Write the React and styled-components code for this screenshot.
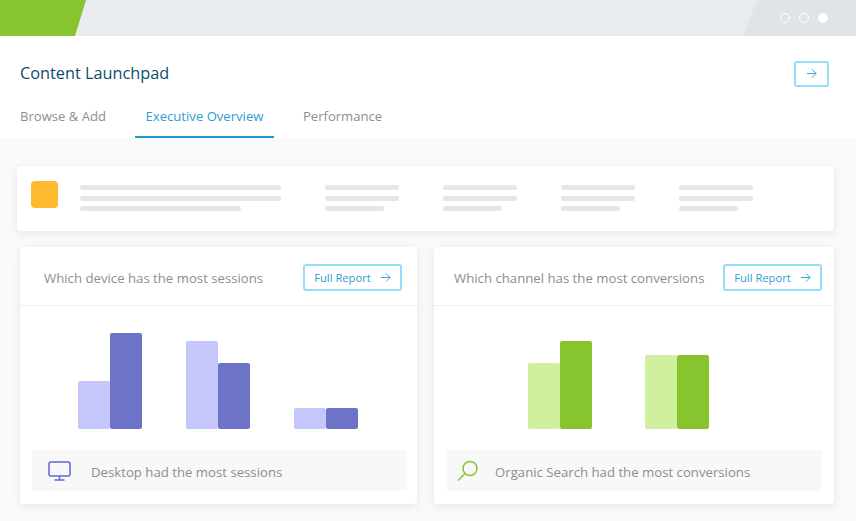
import React from "react";
import styled, { createGlobalStyle } from "styled-components";

const GlobalStyle = createGlobalStyle`
  html, body {
    margin: 0;
    padding: 0;
    background: #f9f9f9;
    font-family: "Open Sans", "Liberation Sans", sans-serif;
  }
`;

const Page = styled.div`
  width: 856px;
  height: 521px;
  overflow: hidden;
  background: #f9f9f9;
`;

const TopBar = styled.div`
  position: relative;
  height: 36px;
  background: #e8ecef;
  display: flex;
  justify-content: flex-end;
  align-items: center;
  gap: 9px;
  padding-right: 28px;
  &::before {
    content: "";
    position: absolute;
    left: 0;
    top: 0;
    width: 86px;
    height: 36px;
    background: #87c42d;
    clip-path: polygon(0 0, 100% 0, 75px 100%, 0 100%);
  }
  &::after {
    content: "";
    position: absolute;
    right: 0;
    top: 0;
    width: 113px;
    height: 36px;
    background: #e0e4e8;
    clip-path: polygon(14px 0, 100% 0, 100% 100%, 0 100%);
  }
`;

const Dot = styled.span`
  position: relative;
  z-index: 1;
  box-sizing: border-box;
  width: 10px;
  height: 10px;
  border-radius: 50%;
  border: 1px solid #fff;
  background: ${(p) => (p.$active ? "#fff" : "transparent")};
`;

const Header = styled.header`
  height: 102px;
  background: #fff;
  box-sizing: border-box;
  padding: 24px 27px 0 20px;
`;

const TitleRow = styled.div`
  display: flex;
  justify-content: space-between;
  align-items: center;
  height: 25px;
`;

const Title = styled.h1`
  margin: 0;
  font-size: 16.3px;
  font-weight: 400;
  color: #0f4c68;
`;

const IconButton = styled.button`
  box-sizing: border-box;
  width: 35px;
  height: 26px;
  margin-top: 2px;
  padding: 0;
  display: flex;
  align-items: center;
  justify-content: center;
  background: #fff;
  border: 2px solid #93dffb;
  border-radius: 3px;
`;

const Tabs = styled.nav`
  display: flex;
  gap: 28.5px;
  margin-top: 10px;
`;

const Tab = styled.div`
  box-sizing: border-box;
  height: 43px;
  padding: 9px ${(p) => (p.$active ? "11px" : "0")} 0;
  font-size: 13.1px;
  line-height: 24px;
  color: ${(p) => (p.$active ? "#2a9fd0" : "#8b8f92")};
  border-bottom: 2px solid ${(p) => (p.$active ? "#1a9bd0" : "transparent")};
`;

const Content = styled.main`
  padding: 28px 22px 0 17px;
`;

const Summary = styled.section`
  height: 65px;
  background: #fff;
  border-radius: 4px;
  box-shadow: 0 2px 8px rgba(0, 0, 0, 0.08);
  display: flex;
  padding: 15px 0 0 14px;
  box-sizing: border-box;
`;

const Swatch = styled.div`
  width: 27px;
  height: 27px;
  border-radius: 4px;
  background: #ffb92e;
  margin-right: 22px;
`;

const LineColumn = styled.div`
  display: flex;
  flex-direction: column;
  gap: 5.5px;
  padding-top: 4px;
  width: ${(p) => p.$width}px;
  margin-right: ${(p) => p.$after}px;
`;

const Line = styled.div`
  height: 5px;
  border-radius: 3px;
  background: #e6e6e6;
  width: ${(p) => p.$width || "100%"};
`;

const Cards = styled.div`
  display: grid;
  grid-template-columns: 397px 400px;
  gap: 17px;
  margin: 16px 0 0 3px;
`;

const Card = styled.article`
  height: 257px;
  background: #fff;
  border-radius: 4px;
  box-shadow: 0 2px 8px rgba(0, 0, 0, 0.08);
  display: flex;
  flex-direction: column;
`;

const CardHead = styled.div`
  height: 59px;
  box-sizing: border-box;
  border-bottom: 1px solid #eef0f1;
  display: flex;
  align-items: center;
  justify-content: space-between;
  padding: 2px ${(p) => p.$right}px 0 ${(p) => p.$left}px;
`;

const CardTitle = styled.h2`
  margin: 2px 0 0;
  font-size: 13.2px;
  font-weight: 400;
  color: #8b8f92;
`;

const ReportButton = styled.button`
  box-sizing: border-box;
  width: 99px;
  height: 27px;
  padding: 0;
  display: flex;
  align-items: center;
  justify-content: center;
  gap: 9px;
  background: #fff;
  border: 2px solid #93dffb;
  border-radius: 3px;
  font-family: inherit;
  font-size: 11.2px;
  color: #2a9fd0;
`;

const Chart = styled.div`
  height: 123px;
  display: flex;
  align-items: flex-end;
  justify-content: center;
  gap: ${(p) => p.$gap}px;
  padding-right: ${(p) => p.$shift || 0}px;
`;

const BarGroup = styled.div`
  display: flex;
  align-items: flex-end;
`;

const Bar = styled.div`
  width: 32px;
  border-radius: 2px;
  background: ${(p) => p.$color};
`;

const Insight = styled.div`
  height: 41px;
  margin: 21px ${(p) => p.$right}px 0 ${(p) => p.$left}px;
  background: #f8f8f8;
  border-radius: 2px;
  display: flex;
  align-items: center;
  padding-left: ${(p) => p.$pad}px;
  font-size: 13.2px;
  color: #8b8f92;
`;

const InsightText = styled.span`
  margin-top: 2px;
`;

const InsightIcon = styled.svg`
  flex: none;
  margin-right: ${(p) => p.$after}px;
`;

const Arrow = ({ size = 11 }) => (
  <svg width={size} height={size} viewBox="0 0 12 12" fill="none" stroke="#2a9fd0" strokeWidth="1">
    <path d="M1 6h10M6.5 1.5 11 6l-4.5 4.5" />
  </svg>
);

const LIGHT = { purple: "#c5c7fa", green: "#cff09c" };
const DARK = { purple: "#6d73c6", green: "#87c42d" };

const Bars = ({ data, tone, gap, shift }) => (
  <Chart $gap={gap} $shift={shift}>
    {data.map(([a, b], i) => (
      <BarGroup key={i}>
        <Bar $color={LIGHT[tone]} style={{ height: a }} />
        <Bar $color={DARK[tone]} style={{ height: b }} />
      </BarGroup>
    ))}
  </Chart>
);

const Report = () => (
  <ReportButton>
    Full Report
    <Arrow />
  </ReportButton>
);

export default function App() {
  return (
    <Page>
      <GlobalStyle />
      <TopBar>
        <Dot />
        <Dot />
        <Dot $active />
      </TopBar>
      <Header>
        <TitleRow>
          <Title>Content Launchpad</Title>
          <IconButton aria-label="Open">
            <Arrow />
          </IconButton>
        </TitleRow>
        <Tabs>
          <Tab>Browse &amp; Add</Tab>
          <Tab $active>Executive Overview</Tab>
          <Tab>Performance</Tab>
        </Tabs>
      </Header>
      <Content>
        <Summary>
          <Swatch />
          <LineColumn $width={201} $after={44}>
            <Line />
            <Line />
            <Line $width="161px" />
          </LineColumn>
          {[0, 1, 2, 3].map((i) => (
            <LineColumn key={i} $width={74} $after={44}>
              <Line />
              <Line />
              <Line $width="59px" />
            </LineColumn>
          ))}
        </Summary>
        <Cards>
          <Card>
            <CardHead $left={24} $right={15}>
              <CardTitle>Which device has the most sessions</CardTitle>
              <Report />
            </CardHead>
            <Bars
              tone="purple"
              gap={44}
              shift={1}
              data={[
                [48, 96],
                [88, 66],
                [21, 21],
              ]}
            />
            <Insight $left={12} $right={10} $pad={16}>
              <InsightIcon $after={20} width="23" height="20" viewBox="0 0 23 20" fill="none" stroke="#5f66d0" strokeWidth="1.5">
                <rect x="1" y="1" width="21" height="14" rx="2" />
                <path d="M11.5 15v4M6.5 19h10" />
              </InsightIcon>
              <InsightText>Desktop had the most sessions</InsightText>
            </Insight>
          </Card>
          <Card>
            <CardHead $left={20} $right={12}>
              <CardTitle>Which channel has the most conversions</CardTitle>
              <Report />
            </CardHead>
            <Bars
              tone="green"
              gap={53}
              shift={31}
              data={[
                [66, 88],
                [74, 74],
              ]}
            />
            <Insight $left={13} $right={12} $pad={10}>
              <InsightIcon $after={16} width="22" height="22" viewBox="0 0 22 22" fill="none" stroke="#87c42d" strokeWidth="1.5">
                <circle cx="13" cy="8.5" r="7" />
                <path d="M8 13.5 1 20.5" />
              </InsightIcon>
              <InsightText>Organic Search had the most conversions</InsightText>
            </Insight>
          </Card>
        </Cards>
      </Content>
    </Page>
  );
}
